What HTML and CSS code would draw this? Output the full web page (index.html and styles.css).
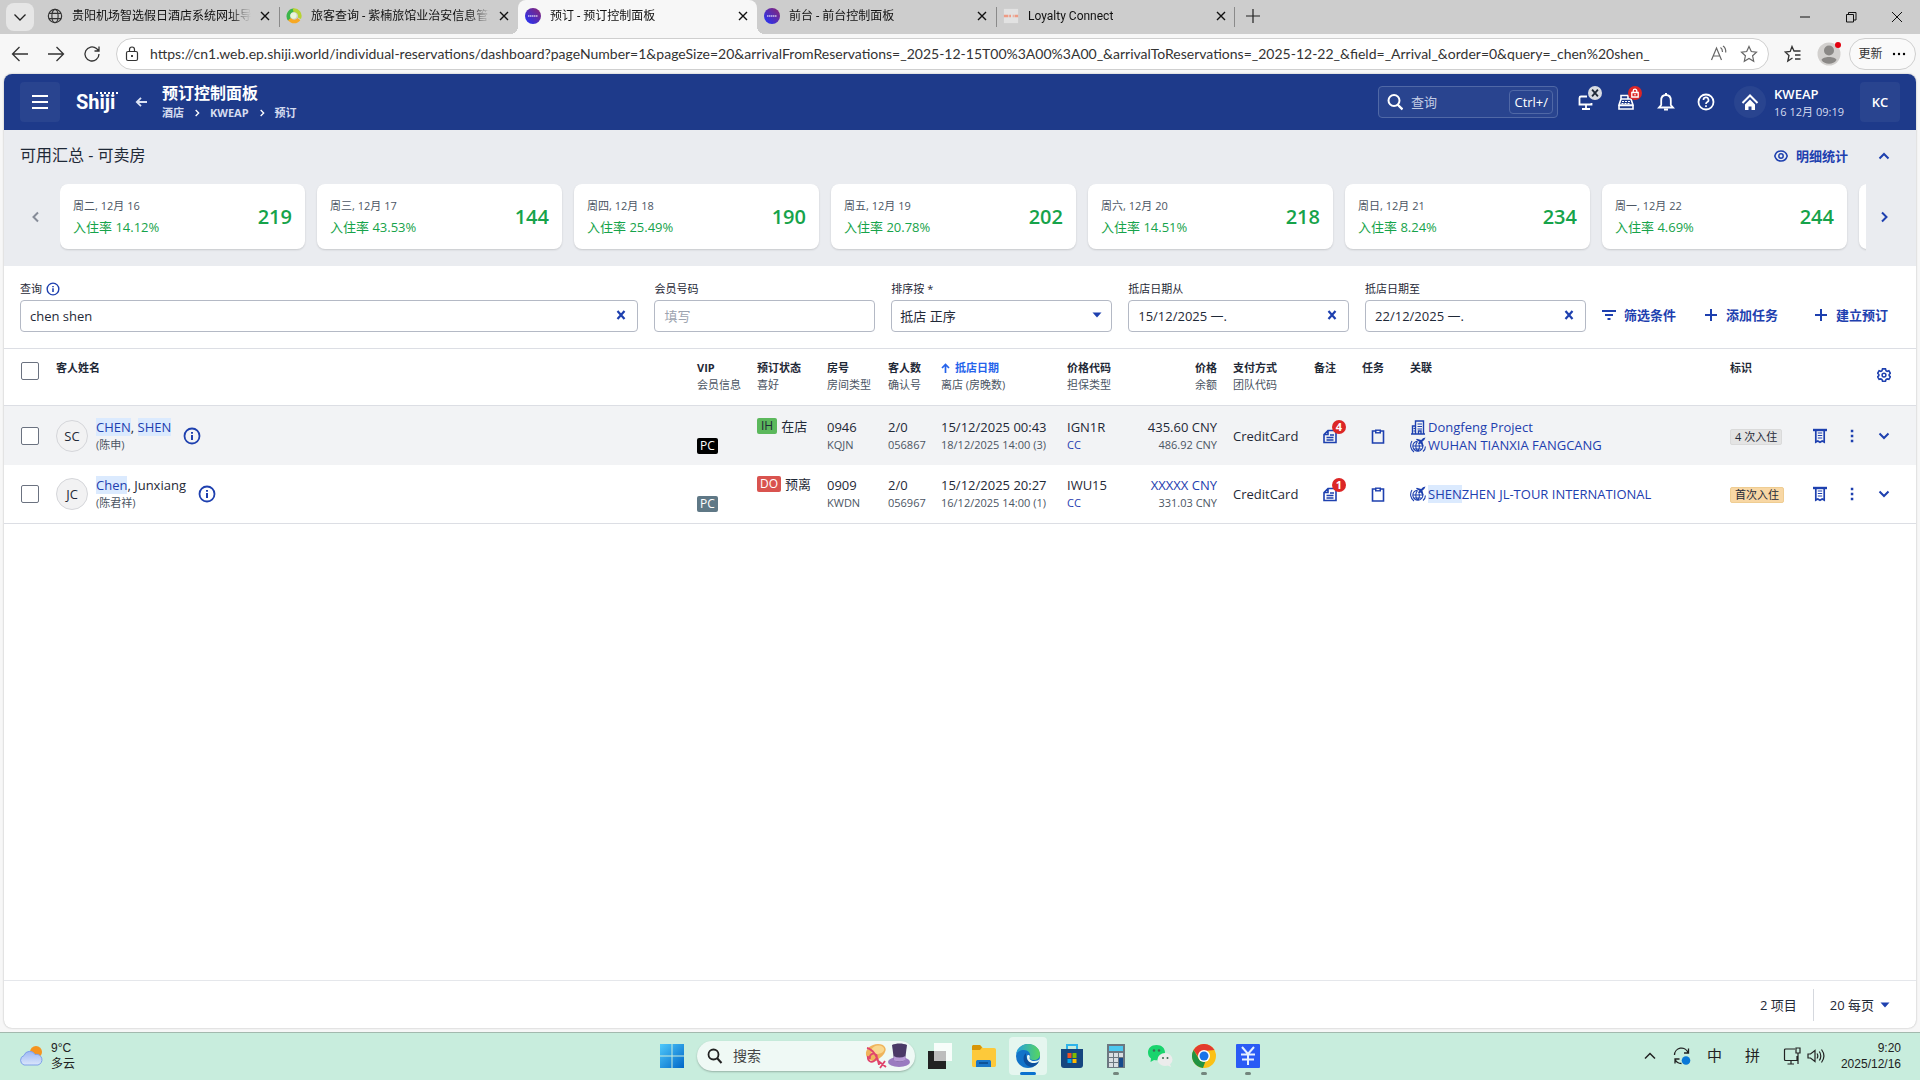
FILE: index.html
```html
<!DOCTYPE html>
<html lang="zh-CN">

<head>
    <meta charset="UTF-8">
    <meta name="viewport" content="width=device-width, initial-scale=1.0">
    <title>预订 - 预订控制面板</title>
    <link rel="stylesheet" href="styles.css">
</head>

<body>
    <!-- shared icons -->
    <svg class="sprite" aria-hidden="true">
        <symbol id="i-close" viewBox="0 0 12 12"><path d="M2 2l8 8M10 2l-8 8" fill="none" stroke="currentColor" stroke-width="1.4"/></symbol>
        <symbol id="i-clear" viewBox="0 0 12 12"><path d="M2.5 2l7 8M9.5 2l-7 8" fill="none" stroke="currentColor" stroke-width="2.2"/></symbol>
        <symbol id="i-left" viewBox="0 0 12 12"><path d="M8 1.5L3.500 6 8 10.500" fill="none" stroke="currentColor" stroke-width="2"/></symbol>
        <symbol id="i-right" viewBox="0 0 12 12"><path d="M4 1.500L8.500 6 4 10.500" fill="none" stroke="currentColor" stroke-width="2"/></symbol>
        <symbol id="i-up" viewBox="0 0 12 12"><path d="M1.500 8.500L6 4l4.500 4.500" fill="none" stroke="currentColor" stroke-width="2"/></symbol>
        <symbol id="i-down" viewBox="0 0 12 12"><path d="M1.500 3.500L6 8l4.500-4.500" fill="none" stroke="currentColor" stroke-width="2"/></symbol>
        <symbol id="i-caret" viewBox="0 0 10 6"><path d="M0.500 0.500h9L5 5.500z" fill="currentColor"/></symbol>
        <symbol id="i-plus" viewBox="0 0 14 14"><path d="M7 1v12M1 7h12" fill="none" stroke="currentColor" stroke-width="2"/></symbol>
        <symbol id="i-info" viewBox="0 0 18 18"><circle cx="9" cy="9" r="7.500" fill="none" stroke="currentColor" stroke-width="1.800"/><path d="M9 8v5M9 5v1.800" stroke="currentColor" stroke-width="2"/></symbol>
        <symbol id="i-notes" viewBox="0 0 16 16"><path d="M6 2.500H14v12H2V6.500zM6 2.500v4H2M4.500 9.500h7M4.500 12h7M8 7h4" fill="none" stroke="currentColor" stroke-width="1.600"/></symbol>
        <symbol id="i-task" viewBox="0 0 16 16"><path d="M2.500 3h11v12h-11z" fill="none" stroke="currentColor" stroke-width="1.600"/><path d="M5 1.500h6v4H5z" fill="currentColor"/><path d="M6.500 3.500h3" stroke="#fff" stroke-width="1.200"/></symbol>
        <symbol id="i-building" viewBox="0 0 16 16"><path d="M1 15h14M2.500 15V7H6M5.500 15V2h8v13M8.500 15v-3H11v3" fill="none" stroke="currentColor" stroke-width="1.400"/><path d="M7.500 5h4.500M7.500 7.500h4.500M7.500 10h4.500M3.500 9.500h1.500M3.500 12h1.500" stroke="currentColor" stroke-width="1.200"/></symbol>
        <symbol id="i-travel" viewBox="0 0 16 16"><path d="M12.800 8.500A5 5 0 1 1 7.500 4.200M3 9h9.500M3.800 12h8M7.500 4.500c-2.200 3-2.200 6.500 0 9.500M9 7.500c.8 2.300.3 4.500-1 6.500M2 4C-.3 7.500.3 12.500 4 15M13 14.500c1.500-1 2.400-3 2.400-5" fill="none" stroke="currentColor" stroke-width="1.100"/><path d="M15.500.500l-2.500.7-1.800 1.900-4.400-1.300-.8.9 3.400 2L8 6.300l.8 1.200 2-1 1.900 3.200.9-.9-1.200-4.200 1.900-1.700z" fill="currentColor"/></symbol>
        <symbol id="i-receipt" viewBox="0 0 16 16"><path d="M1 2h14" stroke="currentColor" stroke-width="2.400"/><path d="M3.800 2v12l2-1L8 14.300l2.200-1.300 2 1V2" fill="none" stroke="currentColor" stroke-width="1.700"/><path d="M5.800 5h4.400M5.800 7.500h4.400M5.800 10h4.400" stroke="currentColor" stroke-width="1.200"/></symbol>
        <symbol id="i-dots" viewBox="0 0 4 14"><path d="M.8.800h2.500v2.500H.8zM.8 5.800h2.500v2.500H.8zM.8 10.800h2.500v2.500H.8z" fill="currentColor"/></symbol>
        <symbol id="i-shiji" viewBox="0 0 16 16"><linearGradient id="gs" x1="1" y1="0" x2="0" y2="1"><stop offset="0" stop-color="#8e246e"/><stop offset="1" stop-color="#1c34ff"/></linearGradient><circle cx="8" cy="8" r="8" fill="url(#gs)"/><path d="M3 8h10" stroke="#fff" stroke-width="1.600" stroke-dasharray="1.500 .5" opacity=".7"/></symbol>
    </svg>

    <!-- browser tabs -->
    <div class="tab-bar">
        <button class="tab-list-button" aria-label="标签页列表"><svg width="14" height="14" viewBox="0 0 14 14"><path d="M1.500 4.500L7 10l5.500-5.500" fill="none" stroke="#222" stroke-width="1.300"/></svg></button>
        <div class="tab">
            <svg class="tab-icon" viewBox="0 0 18 18"><g fill="none" stroke="#333" stroke-width="1.300"><circle cx="9" cy="9" r="7.500"/><ellipse cx="9" cy="9" rx="3.500" ry="7.500"/><path d="M2.300 6h13.400M2.300 12h13.400"/></g></svg>
            <span class="tab-title">贵阳机场智选假日酒店系统网址导航</span>
            <button class="tab-close" aria-label="关闭"><svg width="12" height="12"><use href="#i-close"/></svg></button>
        </div>
        <div class="tab divided">
            <svg class="tab-icon" viewBox="0 0 18 18"><g fill="none" stroke-width="4"><path d="M4 13A6.500 6.500 0 0 1 9 2.500" stroke="#3cb54a"/><path d="M8 2.500a6.500 6.500 0 0 1 7 9" stroke="#b7d334"/><path d="M4 12.500a6.500 6.500 0 0 0 10.500 0" stroke="#f7a823"/></g><circle cx="8.500" cy="8.500" r="3.500" fill="#e9f6d8"/></svg>
            <span class="tab-title">旅客查询 - 紫楠旅馆业治安信息管理系统</span>
            <button class="tab-close" aria-label="关闭"><svg width="12" height="12"><use href="#i-close"/></svg></button>
        </div>
        <div class="tab active">
            <svg class="tab-icon"><use href="#i-shiji"/></svg>
            <span class="tab-title">预订 - 预订控制面板</span>
            <button class="tab-close" aria-label="关闭"><svg width="12" height="12"><use href="#i-close"/></svg></button>
        </div>
        <div class="tab">
            <svg class="tab-icon"><use href="#i-shiji"/></svg>
            <span class="tab-title">前台 - 前台控制面板</span>
            <button class="tab-close" aria-label="关闭"><svg width="12" height="12"><use href="#i-close"/></svg></button>
        </div>
        <div class="tab divided last">
            <svg class="tab-icon" viewBox="0 0 18 18"><rect x="1" y="1" width="16" height="16" fill="#e2e2e2"/><path d="M1 9h5M7 9h2M11 9h1M13 9h4" stroke="#ee9b84" stroke-width="3"/></svg>
            <span class="tab-title">Loyalty Connect</span>
            <button class="tab-close" aria-label="关闭"><svg width="12" height="12"><use href="#i-close"/></svg></button>
        </div>
        <button class="new-tab" aria-label="新建标签页"><svg width="16" height="16" viewBox="0 0 16 16"><path d="M8 1v14M1 8h14" stroke="#222" stroke-width="1.200"/></svg></button>
        <div class="window-buttons">
            <button aria-label="最小化"><svg width="12" height="12" viewBox="0 0 12 12"><path d="M1 6h10" stroke="#111"/></svg></button>
            <button aria-label="还原"><svg width="12" height="12" viewBox="0 0 12 12"><path d="M1.500 3.500h7v7.500h-7zM3.500 3V1.500h7.500v7.500H9" fill="none" stroke="#111"/></svg></button>
            <button aria-label="关闭窗口"><svg width="12" height="12" viewBox="0 0 12 12"><path d="M1 1l10 10M11 1L1 11" stroke="#111"/></svg></button>
        </div>
    </div>

    <!-- address bar -->
    <div class="toolbar">
        <button class="nav-button" aria-label="后退"><svg width="18" height="16" viewBox="0 0 18 16"><path d="M17 8H2M8.500 1L1.500 8l7 7" fill="none" stroke="#333" stroke-width="1.300"/></svg></button>
        <button class="nav-button" aria-label="前进"><svg width="18" height="16" viewBox="0 0 18 16"><path d="M1 8h15M9.500 1l7 7-7 7" fill="none" stroke="#333" stroke-width="1.300"/></svg></button>
        <button class="nav-button" aria-label="刷新"><svg width="18" height="18" viewBox="0 0 18 18"><path d="M16 9a7 7 0 1 1-2.500-5.400L16 6M16 1.500V6h-4.500" fill="none" stroke="#333" stroke-width="1.300"/></svg></button>
        <div class="address">
            <svg width="14" height="16" viewBox="0 0 14 16"><rect x="1.500" y="5.500" width="11" height="9" rx="1.500" fill="none" stroke="#333" stroke-width="1.200"/><path d="M4.500 5.500V3.500a2.500 2.500 0 0 1 5 0v2" fill="none" stroke="#333" stroke-width="1.200"/><circle cx="7" cy="10" r="1"/></svg>
            <input type="text" aria-label="地址" value="https://cn1.web.ep.shiji.world/individual-reservations/dashboard?pageNumber=1&amp;pageSize=20&amp;arrivalFromReservations=_2025-12-15T00%3A00%3A00_&amp;arrivalToReservations=_2025-12-22_&amp;field=_Arrival_&amp;order=0&amp;query=_chen%20shen_">
            <button aria-label="朗读"><svg width="18" height="18" viewBox="0 0 18 18"><path d="M1.500 15L6.500 3l5 12M3.200 11h6.600M10.500 2.500c1.500 1 2 2.500 2 4.500M13 1c2.500 1.700 3 4 2.700 6.500" fill="none" stroke="#666" stroke-width="1.200"/></svg></button>
            <button aria-label="收藏"><svg width="18" height="18" viewBox="0 0 18 18"><path d="M9 1.500l2.300 5 5.200.6-3.900 3.700 1.100 5.400L9 13.500l-4.700 2.700 1.100-5.400L1.500 7.100l5.200-.6z" fill="none" stroke="#666" stroke-width="1.200"/></svg></button>
        </div>
        <button class="favorites" aria-label="收藏夹"><svg width="18" height="18" viewBox="0 0 18 18"><path d="M8.500 13l-4.700 3 1.200-5.500L1.200 7l5-.6L8 1.500l2 4.500h6.500M11 10h5.500M11 14h5.500" fill="none" stroke="#333" stroke-width="1.300"/></svg></button>
        <button class="profile" aria-label="用户"><svg width="24" height="24" viewBox="0 0 24 24"><circle cx="12" cy="12" r="11.500" fill="#d2d0ce"/><circle cx="12" cy="8.500" r="5" fill="#8a8886"/><path d="M4.500 18c1-4 14-4 15 0-3 5-12 5-15 0z" fill="#8a8886"/></svg></button>
        <button class="update">更新 <svg width="16" height="4" viewBox="0 0 16 4"><circle cx="3" cy="2" r="1.200"/><circle cx="8" cy="2" r="1.200"/><circle cx="13" cy="2" r="1.200"/></svg></button>
    </div>

    <div class="app">
        <header class="app-header">
            <button class="menu-button" aria-label="菜单"><svg width="16" height="14" viewBox="0 0 16 14"><path d="M0 1h16M0 7h16M0 13h16" stroke="#fff" stroke-width="2"/></svg></button>
            <div class="logo">Shiji<svg width="26" height="4" viewBox="0 0 26 4"><path d="M1 2h24" stroke="#fff" stroke-width="2" stroke-dasharray="2 2"/></svg></div>
            <button class="back-button" aria-label="返回"><svg width="12" height="10" viewBox="0 0 12 10"><path d="M12 5H2M6 .8L1.800 5 6 9.200" fill="none" stroke="#dbe2f4" stroke-width="1.800"/></svg></button>
            <div class="heading">
                <h1>预订控制面板</h1>
                <nav class="breadcrumb">
                    <a href="#">酒店</a>
                    <svg width="8" height="8"><use href="#i-right"/></svg>
                    <a href="#">KWEAP</a>
                    <svg width="8" height="8"><use href="#i-right"/></svg>
                    <a href="#">预订</a>
                </nav>
            </div>
            <label class="global-search">
                <svg width="16" height="18" viewBox="0 0 16 18"><circle cx="7" cy="7.500" r="5.500" fill="none" stroke="#fff" stroke-width="2"/><path d="M10.500 11.500l5 5" stroke="#fff" stroke-width="2.400"/></svg>
                <input type="text" placeholder="查询" aria-label="查询">
                <kbd>Ctrl+/</kbd>
            </label>
            <div class="header-icons">
                <button aria-label="工作站">
                    <svg width="18" height="18" viewBox="0 0 18 18"><path d="M10 3.500H4A1.500 1.500 0 0 0 2.500 5v6.500h12V10M9 12v3.500M5 16h8" fill="none" stroke="#fff" stroke-width="1.800"/></svg>
                    <span class="badge gray"><svg width="10" height="10"><use href="#i-clear"/></svg></span>
                </button>
                <button aria-label="收银">
                    <svg width="18" height="18" viewBox="0 0 18 18"><path d="M4 2.500h7V6H4zM4 6h10l2 6H2zM2 12.500h14V16H2z" fill="none" stroke="#fff" stroke-width="1.600"/><path d="M5 8.500h8M4.500 10.500h9" stroke="#fff" stroke-width="1.200" stroke-dasharray="2 1"/></svg>
                    <span class="badge red"><svg width="10" height="10" viewBox="0 0 10 10"><path d="M1.800 4.500h6.400V9H1.800zM3.200 4.500V3a1.800 1.800 0 0 1 3.600 0v1.500M5 6v1.500" fill="none" stroke="#fff" stroke-width="1.300"/></svg></span>
                </button>
                <button aria-label="通知"><svg width="18" height="20" viewBox="0 0 18 20"><path d="M9 3c-3.300 0-4.800 2.500-4.800 5.500V13L2 15.500h14L13.800 13V8.500C13.800 5.500 12.300 3 9 3z" fill="none" stroke="#fff" stroke-width="1.800"/><path d="M9 1v2M7 17.500h4" stroke="#fff" stroke-width="2"/></svg></button>
                <button aria-label="帮助"><svg width="18" height="18" viewBox="0 0 18 18"><circle cx="9" cy="9" r="7.500" fill="none" stroke="#fff" stroke-width="1.800"/><path d="M6.500 7a2.500 2.500 0 1 1 3.500 2.200c-.8.400-1 .8-1 1.800M9 12.300v1.800" fill="none" stroke="#fff" stroke-width="1.700"/></svg></button>
            </div>
            <button class="home-button" aria-label="主页"><svg width="18" height="18" viewBox="0 0 18 18"><path d="M1.500 10L9 2.500l7.500 7.500" fill="none" stroke="#fff" stroke-width="2"/><path d="M4 11.500l5-5 5 5V17h-3.500v-3.500h-3V17H4z" fill="#fff"/></svg></button>
            <div class="property">
                <strong>KWEAP</strong>
                <span>16 12月 09:19</span>
            </div>
            <button class="user-button">KC</button>
        </header>

        <!-- availability -->
        <section class="availability">
            <div class="availability-top">
                <h2>可用汇总 - 可卖房</h2>
                <button class="text-button"><svg width="14" height="14" viewBox="0 0 14 14"><path d="M7 2C3.500 2 1.500 4.500.8 7 1.500 9.500 3.500 12 7 12s5.500-2.500 6.200-5C12.500 4.500 10.500 2 7 2z" fill="none" stroke="currentColor" stroke-width="1.500"/><circle cx="7" cy="7" r="2.200" fill="none" stroke="currentColor" stroke-width="1.500"/></svg>明细统计</button>
                <button class="collapse-button" aria-label="收起"><svg width="12" height="12"><use href="#i-up"/></svg></button>
            </div>
            <div class="carousel">
                <button class="prev" aria-label="上一页"><svg width="12" height="12"><use href="#i-left"/></svg></button>
                <div class="cards">
                    <div class="card"><div><p>周二, 12月 16</p><p class="rate">入住率 14.12%</p></div><strong>219</strong></div>
                    <div class="card"><div><p>周三, 12月 17</p><p class="rate">入住率 43.53%</p></div><strong>144</strong></div>
                    <div class="card"><div><p>周四, 12月 18</p><p class="rate">入住率 25.49%</p></div><strong>190</strong></div>
                    <div class="card"><div><p>周五, 12月 19</p><p class="rate">入住率 20.78%</p></div><strong>202</strong></div>
                    <div class="card"><div><p>周六, 12月 20</p><p class="rate">入住率 14.51%</p></div><strong>218</strong></div>
                    <div class="card"><div><p>周日, 12月 21</p><p class="rate">入住率 8.24%</p></div><strong>234</strong></div>
                    <div class="card"><div><p>周一, 12月 22</p><p class="rate">入住率 4.69%</p></div><strong>244</strong></div>
                    <div class="card"></div>
                </div>
                <button class="next" aria-label="下一页"><svg width="12" height="12"><use href="#i-right"/></svg></button>
            </div>
        </section>

        <!-- filters -->
        <form class="filters">
            <div class="field wide">
                <label for="query">查询 <svg width="14" height="14"><use href="#i-info"/></svg></label>
                <div class="control"><input id="query" type="text" value="chen shen"><button type="button" aria-label="清除"><svg width="12" height="12"><use href="#i-clear"/></svg></button></div>
            </div>
            <div class="field">
                <label for="member">会员号码</label>
                <div class="control"><input id="member" type="text" placeholder="填写"></div>
            </div>
            <div class="field">
                <label for="sort">排序按 *</label>
                <div class="control">
                    <select id="sort"><option>抵店 正序</option></select>
                    <svg class="caret" width="10" height="6"><use href="#i-caret"/></svg>
                </div>
            </div>
            <div class="field">
                <label for="from">抵店日期从</label>
                <div class="control"><input id="from" type="text" value="15/12/2025 一."><button type="button" aria-label="清除"><svg width="12" height="12"><use href="#i-clear"/></svg></button></div>
            </div>
            <div class="field">
                <label for="to">抵店日期至</label>
                <div class="control"><input id="to" type="text" value="22/12/2025 一."><button type="button" aria-label="清除"><svg width="12" height="12"><use href="#i-clear"/></svg></button></div>
            </div>
            <div class="filter-actions">
                <button type="button" class="text-button"><svg width="14" height="14" viewBox="0 0 14 14"><path d="M0 3h14M3 7h8M5.500 11h3" stroke="currentColor" stroke-width="1.800"/></svg>筛选条件</button>
                <button type="button" class="text-button"><svg width="14" height="14"><use href="#i-plus"/></svg>添加任务</button>
                <button type="button" class="text-button create"><svg width="14" height="14"><use href="#i-plus"/></svg>建立预订</button>
            </div>
        </form>

        <!-- reservations -->
        <main class="results">
            <table>
                <thead>
                    <tr>
                        <th class="col-select"><input type="checkbox" aria-label="全选"></th>
                        <th>客人姓名</th>
                        <th class="col-vip">VIP<small>会员信息</small></th>
                        <th class="col-status">预订状态<small>喜好</small></th>
                        <th class="col-room">房号<small>房间类型</small></th>
                        <th class="col-guests">客人数<small>确认号</small></th>
                        <th class="col-date"><span class="sorted"><svg width="9" height="10" viewBox="0 0 9 10"><path d="M4.500 10V2M1 5l3.500-3.500L8 5" fill="none" stroke="currentColor" stroke-width="1.700"/></svg>抵店日期</span><small>离店 (房晚数)</small></th>
                        <th class="col-code">价格代码<small>担保类型</small></th>
                        <th class="col-price">价格<small>余额</small></th>
                        <th class="col-pay">支付方式<small>团队代码</small></th>
                        <th class="col-icon">备注</th>
                        <th class="col-icon">任务</th>
                        <th class="col-link">关联</th>
                        <th class="col-flag">标识</th>
                        <th class="col-actions"><button aria-label="设置"><svg width="14" height="14" viewBox="0 0 16 16"><path d="M6.300 1h3.400l.6 2 1.300.8 2-.6 1.700 2.900L13.900 7.500v1.300l1.400 1.300-1.700 2.900-2-.5-1.300.7-.6 1.900H6.300l-.6-1.900-1.300-.7-2 .5-1.700-2.900L2.100 8.800V7.500L.7 6.100l1.700-2.900 2 .6L5.700 3z" fill="none" stroke="currentColor" stroke-width="1.800"/><circle cx="8" cy="8.100" r="2.200" fill="none" stroke="currentColor" stroke-width="1.700"/></svg></button></th>
                    </tr>
                </thead>
                <tbody>
                    <tr>
                        <td class="col-select"><input type="checkbox" aria-label="选择 CHEN, SHEN"></td>
                        <td>
                            <div class="guest">
                                <span class="avatar">SC</span>
                                <div><mark>CHEN</mark>, <mark>SHEN</mark><small>(陈申)</small></div>
                                <svg width="18" height="18"><use href="#i-info"/></svg>
                            </div>
                        </td>
                        <td><div class="low"><span class="tag black">PC</span></div></td>
                        <td><div class="high"><span class="tag green">IH</span>在店</div></td>
                        <td>0946<small>KQJN</small></td>
                        <td>2/0<small>056867</small></td>
                        <td>15/12/2025 00:43<small>18/12/2025 14:00 (3)</small></td>
                        <td>IGN1R<small><a href="#">CC</a></small></td>
                        <td class="col-price">435.60 CNY<small>486.92 CNY</small></td>
                        <td>CreditCard</td>
                        <td><button class="notes" aria-label="备注"><svg width="16" height="16"><use href="#i-notes"/></svg><span class="badge red">4</span></button></td>
                        <td><button class="task" aria-label="任务"><svg width="16" height="16"><use href="#i-task"/></svg></button></td>
                        <td>
                            <a class="link" href="#"><svg width="16" height="16"><use href="#i-building"/></svg>Dongfeng Project</a>
                            <a class="link" href="#"><svg width="16" height="16"><use href="#i-travel"/></svg>WUHAN TIANXIA FANGCANG</a>
                        </td>
                        <td><span class="stay">4 次入住</span></td>
                        <td class="col-actions">
                            <div class="actions">
                                <button aria-label="账单"><svg width="16" height="16"><use href="#i-receipt"/></svg></button>
                                <button aria-label="更多"><svg width="4" height="14"><use href="#i-dots"/></svg></button>
                                <button aria-label="展开"><svg width="12" height="12"><use href="#i-down"/></svg></button>
                            </div>
                        </td>
                    </tr>
                    <tr>
                        <td class="col-select"><input type="checkbox" aria-label="选择 Chen, Junxiang"></td>
                        <td>
                            <div class="guest">
                                <span class="avatar">JC</span>
                                <div><mark>Chen</mark>, Junxiang<small>(陈君祥)</small></div>
                                <svg width="18" height="18"><use href="#i-info"/></svg>
                            </div>
                        </td>
                        <td><div class="low"><span class="tag slate">PC</span></div></td>
                        <td><div class="high"><span class="tag crimson">DO</span>预离</div></td>
                        <td>0909<small>KWDN</small></td>
                        <td>2/0<small>056967</small></td>
                        <td>15/12/2025 20:27<small>16/12/2025 14:00 (1)</small></td>
                        <td>IWU15<small><a href="#">CC</a></small></td>
                        <td class="col-price"><a href="#">XXXXX CNY</a><small>331.03 CNY</small></td>
                        <td>CreditCard</td>
                        <td><button class="notes" aria-label="备注"><svg width="16" height="16"><use href="#i-notes"/></svg><span class="badge red">1</span></button></td>
                        <td><button class="task" aria-label="任务"><svg width="16" height="16"><use href="#i-task"/></svg></button></td>
                        <td>
                            <a class="link" href="#"><svg width="16" height="16"><use href="#i-travel"/></svg><span><mark>SHEN</mark>ZHEN JL-TOUR INTERNATIONAL</span></a>
                        </td>
                        <td><span class="stay first">首次入住</span></td>
                        <td class="col-actions">
                            <div class="actions">
                                <button aria-label="账单"><svg width="16" height="16"><use href="#i-receipt"/></svg></button>
                                <button aria-label="更多"><svg width="4" height="14"><use href="#i-dots"/></svg></button>
                                <button aria-label="展开"><svg width="12" height="12"><use href="#i-down"/></svg></button>
                            </div>
                        </td>
                    </tr>
                </tbody>
            </table>
        </main>

        <footer class="pager">
            <span>2 项目</span>
            <button class="page-size">20 每页<svg width="10" height="6"><use href="#i-caret"/></svg></button>
        </footer>
    </div>

    <!-- taskbar -->
    <div class="taskbar">
        <div class="weather">
            <svg width="24" height="22" viewBox="0 0 24 22"><linearGradient id="gw" x1="0" y1="0" x2="0" y2="1"><stop offset="0" stop-color="#9db8f3"/><stop offset="1" stop-color="#dbe6fb"/></linearGradient><circle cx="17" cy="7" r="6" fill="#f5941f"/><path d="M5 20a5 5 0 0 1 0-9.500A6 6 0 0 1 16 9.500a5.300 5.300 0 0 1 3 10.500z" fill="url(#gw)" stroke="#7ea0ea"/></svg>
            <div>9°C<br>多云</div>
        </div>
        <div class="task-icons">
            <button aria-label="开始"><svg width="24" height="24" viewBox="0 0 24 24"><linearGradient id="gb" x1="0" y1="0" x2="1" y2="1"><stop offset="0" stop-color="#4fc9fb"/><stop offset="1" stop-color="#0067c8"/></linearGradient><path d="M0 0h11.500v11.500H0zM12.500 0H24v11.500H12.500zM0 12.500h11.500V24H0zM12.500 12.500H24V24H12.500z" fill="url(#gb)"/></svg></button>
            <label class="task-search">
                <svg width="16" height="16" viewBox="0 0 16 16"><circle cx="6.500" cy="6.500" r="5" fill="none" stroke="#222" stroke-width="1.800"/><path d="M10 10l4.500 5" stroke="#222" stroke-width="2"/></svg>
                <input type="text" placeholder="搜索" aria-label="搜索">
                <svg width="46" height="26" viewBox="0 0 46 26">
                    <path d="M1 12C0 6 6 1 13 1c7 0 9 5 7 8-2 5-6 6-9 9-4 1-9-2-10-6z" fill="#efb45c"/><path d="M6 8c1-5 8-7 12-4 3 3 0 6-5 7-4 1-7 0-7-3z" fill="#f9d78e"/><path d="M2 5c5 1 11 8 12 17M3 13c-1 5 3 7 6 5s4-6 1-7-6 1-5 5M12 17l9 7M20 18l-5 7" fill="none" stroke="#e0446c" stroke-width="1.800"/>
                    <ellipse cx="34" cy="19" rx="11" ry="5" fill="#9a7bc0"/><path d="M27 2c4-2 11-2 15 0l-2 15c-3 2-8 2-11 0z" fill="#4a3a66"/><path d="M28.500 13c4 2 8 2 12 0v4c-4 2-8 2-11.500.500z" fill="#b79bd6"/>
                </svg>
            </label>
            <button aria-label="任务视图"><svg width="24" height="26" viewBox="0 0 24 26"><path d="M0 8h18v18H0z" fill="#222"/><path d="M6 0h18v18H6z" fill="#fff" opacity=".85"/><path d="M6 8h12v10H6z" fill="#bdbdbd"/></svg></button>
            <button aria-label="文件资源管理器"><svg width="24" height="24" viewBox="0 0 24 24"><path d="M0 3c0-1.500.8-2 2-2h6l3 3h11c1.500 0 2 .8 2 2v15c0 1.500-.5 2-2 2H2c-1.500 0-2-.5-2-2z" fill="#fdc93a"/><path d="M0 6V3c0-1.500.8-2 2-2h6l2 2.500L8 6z" fill="#d79507"/><path d="M4 23v-5c0-1.500.8-2 2-2h11c1.200 0 2 .5 2 2v5z" fill="#1a76c8"/><path d="M7 19h9" stroke="#0d5297" stroke-width="2"/></svg></button>
            <button class="current" aria-label="Edge"><svg width="24" height="24" viewBox="0 0 24 24"><linearGradient id="ge" x1="0" y1="0" x2="1" y2="0"><stop offset="0" stop-color="#229fe0"/><stop offset="1" stop-color="#58d65e"/></linearGradient><circle cx="12" cy="12" r="12" fill="#1173c9"/><path d="M0 11C1 4 6 0 12 0c7 0 12 5 12 10 0 4-3 6-6 6-3.500 0-5-1.500-4-3C15 9 12 6 8 6c-4 0-7 2-8 5z" fill="url(#ge)"/><path d="M10 9c-5 4-2 13 5 14 4-.5 7-3 8-6-7 4-14 0-13-8z" fill="#0c4f9c"/><path d="M13.800 13c-1 2 1 4 4.500 4 2.500 0 4.500-1 5.200-2l-.8 2.500c-6 3.500-12.200.500-11.700-5 .3-2 3-2 2.800.5z" fill="#e7f6f2"/></svg></button>
            <button aria-label="商店"><svg width="24" height="26" viewBox="0 0 24 26"><path d="M7 7V2h10v5" fill="none" stroke="#2fb4ea" stroke-width="2"/><path d="M1 6h22v16c0 2-1 3-3 3H4c-2 0-3-1-3-3z" fill="#15467f"/><path d="M7.500 10h4v5h-4z" fill="#f25022"/><path d="M12.500 10h4v5h-4z" fill="#7fba00"/><path d="M7.500 16h4v4h-4z" fill="#00a4ef"/><path d="M12.500 16h4v4h-4z" fill="#ffb900"/></svg></button>
            <button class="running" aria-label="计算器"><svg width="20" height="26" viewBox="0 0 20 26"><path d="M1 1h18v24H1z" fill="#6b7780"/><path d="M3 3h14v5H3z" fill="#4cc8ef"/><path d="M3 10h4v4H3zM8 10h4v4H8zM13 10h4v4h-4zM3 15h4v4H3zM8 15h4v4H8zM3 20h4v4H3zM8 20h4v4H8z" fill="#d9dee2"/><path d="M13 15h4v9h-4z" fill="#164a8c"/></svg></button>
            <button aria-label="微信"><svg width="26" height="24" viewBox="0 0 26 24"><path d="M9.500 1C4 1 1 4.500 1 8.500c0 2.500 1 4.500 3 6L3.500 18l3.500-2c6 1.500 11-2 11-7.500C18 4.500 15 1 9.500 1z" fill="#19d46d"/><ellipse cx="18" cy="15.500" rx="7.500" ry="6.500" fill="#ececec"/><path d="M20 21l4 2-1-3z" fill="#ececec"/><g fill="#3b6b51"><circle cx="7" cy="6.500" r="1.200"/><circle cx="12" cy="6.500" r="1.200"/><circle cx="16" cy="14" r="1"/><circle cx="20.500" cy="14" r="1"/></g></svg></button>
            <button class="running" aria-label="Chrome"><svg width="24" height="24" viewBox="0 0 24 24"><circle cx="12" cy="12" r="12" fill="#fbc116"/><path d="M1.600 6A12 12 0 0 1 22.400 6L12 7a5 5 0 0 0-4.500 7.500z" fill="#e33b2e"/><path d="M1.600 6l5.700 9.500c1.500 2 4 2.500 6.200 1.500L11 24A12 12 0 0 1 1.600 6z" fill="#229342"/><circle cx="12" cy="12" r="6" fill="#fff"/><circle cx="12" cy="12" r="4.500" fill="#1a73e8"/></svg></button>
            <button class="running" aria-label="收银系统"><svg width="24" height="24" viewBox="0 0 24 24"><rect width="24" height="24" rx="1" fill="#2a5bf5"/><path d="M6 3l6 7 6-7M12 10v11M5 10.500h14M6 15.500h12" fill="none" stroke="#e6f0ff" stroke-width="2"/></svg></button>
        </div>
        <div class="tray">
            <svg width="14" height="14" viewBox="0 0 14 14"><path d="M2 9.500L7 4.500l5 5" fill="none" stroke="#222" stroke-width="1.500"/></svg>
            <svg width="18" height="18" viewBox="0 0 18 18"><path d="M1.500 8a7 7 0 0 1 13.500-2.500M15.500 1.500v4.500H11M2 16.500V12h4.500M2 12.500c1.500 3 3.500 4 6.500 4" fill="none" stroke="#222" stroke-width="1.300"/><circle cx="13" cy="13.500" r="4.300" fill="#0a78d7"/></svg>
            <span>中</span>
            <span>拼</span>
            <svg width="18" height="18" viewBox="0 0 18 18"><path d="M12 2H2.500a1 1 0 0 0-1 1v9.500a1 1 0 0 0 1 1H14V9M8 13.500V17M4.500 17H11M13 1h4v5h-4zM15 6v11" fill="none" stroke="#222" stroke-width="1.200"/></svg>
            <svg class="speaker" width="18" height="16" viewBox="0 0 18 16"><path d="M1 6v4h2.500L8 13.500v-11L3.500 6zM10 5.500c1 1.500 1 3.500 0 5M12.300 3.500c2 2.500 2 6.500 0 9M14.500 1.500c3 4 3 9 0 13" fill="none" stroke="#222" stroke-width="1.200"/></svg>
            <div class="clock">9:20<br>2025/12/16</div>
        </div>
    </div>
</body>

</html>
```
FILE: styles.css
```css
* {
    box-sizing: border-box;
}

body {
    margin: 0;
    height: 100vh;
    display: flex;
    flex-direction: column;
    background-color: #f7f7f7;
    color: #1f2937;
    font-family: "Open Sans", "Noto Sans CJK SC", sans-serif;
    font-size: 13px;
    line-height: 18px;
}

button,
input,
select {
    margin: 0;
    padding: 0;
    border: 0;
    background: none;
    color: inherit;
    font: inherit;
    outline: none;
}

button {
    display: flex;
    align-items: center;
    justify-content: center;
    cursor: pointer;
}

svg {
    flex: none;
    display: block;
}

p,
h1,
h2 {
    margin: 0;
}

a {
    color: #1e40af;
    text-decoration: none;
}

.sprite {
    position: absolute;
    width: 0;
    height: 0;
}

/* browser tabs */
.tab-bar {
    display: flex;
    flex: none;
    height: 34px;
    background-color: #cdcdcd;
    color: #111;
    font-family: Roboto, "Noto Sans CJK SC", sans-serif;
    font-size: 12px;
}

.tab-list-button {
    width: 28px;
    height: 28px;
    margin: 3px 6px;
    border-radius: 8px;
    background-color: #e6e6e6;
}

.tab {
    position: relative;
    display: flex;
    align-items: center;
    flex: 0 1 239px;
    min-width: 0;
    height: 34px;
    padding: 0 6px 2px 7px;
}

.tab-icon {
    width: 16px;
    height: 16px;
    margin: 0 9px 0 0;
}

.tab-title {
    flex: 1;
    min-width: 0;
    overflow: hidden;
    white-space: nowrap;
    mask-image: linear-gradient(to right, #000 88%, transparent);
}

.tab-close {
    width: 16px;
    height: 16px;
    margin-left: 6px;
}

.divided::before,
.last::after {
    content: "";
    position: absolute;
    left: 0;
    top: 7px;
    width: 1px;
    height: 20px;
    background-color: #8a8a8a;
}

.last::after {
    left: auto;
    right: 0;
}

.active {
    background-color: #f7f7f7;
    border-radius: 8px 8px 0 0;
}

.active::before,
.active::after {
    content: "";
    position: absolute;
    bottom: 0;
    left: -8px;
    width: 8px;
    height: 8px;
    background: radial-gradient(circle at 0 0, transparent 8px, #f7f7f7 8px);
}

.active::after {
    left: auto;
    right: -8px;
    background: radial-gradient(circle at 100% 0, transparent 8px, #f7f7f7 8px);
}

.new-tab {
    width: 36px;
    height: 32px;
}

.window-buttons {
    display: flex;
    margin-left: auto;
}

.window-buttons button {
    width: 46px;
    height: 34px;
}

/* address bar */
.toolbar {
    display: flex;
    align-items: center;
    flex: none;
    height: 40px;
    padding: 0 4px 0 2px;
    color: #333;
    font-family: Lato, "Noto Sans CJK SC", sans-serif;
    font-size: 14px;
}

.nav-button {
    width: 36px;
    height: 32px;
}

.address {
    display: flex;
    align-items: center;
    flex: 1;
    height: 32px;
    margin: 0 8px 0 6px;
    padding: 0 4px 0 8px;
    border: 1px solid #cfcfcf;
    border-radius: 16px;
    background-color: #fff;
}

.address input {
    flex: 1;
    min-width: 0;
    margin-left: 11px;
}

.address button {
    width: 30px;
    height: 30px;
}

.favorites {
    width: 32px;
    height: 32px;
}

.profile {
    position: relative;
    width: 24px;
    height: 24px;
    margin: 0 8px;
}

.profile::after {
    content: "";
    position: absolute;
    top: 0;
    right: 0;
    width: 6px;
    height: 6px;
    border-radius: 50%;
    background-color: #e3000f;
}

.update {
    gap: 8px;
    width: 67px;
    height: 32px;
    border: 1px solid #cfcfcf;
    border-radius: 16px;
    background-color: #fafafa;
    font-size: 12px;
}

/* app */
.app {
    display: flex;
    flex-direction: column;
    flex: 1;
    min-height: 0;
    margin: 0 4px 4px;
    border-radius: 8px;
    overflow: hidden;
    background-color: #fff;
    box-shadow: 0 0 2px rgba(0, 0, 0, 0.3);
}

.app-header {
    display: flex;
    align-items: center;
    flex: none;
    height: 56px;
    padding: 0 16px;
    background-color: #1e3a8a;
    color: #fff;
}

.menu-button,
.user-button {
    width: 40px;
    height: 40px;
    border-radius: 4px;
    background-color: #29448f;
    font-weight: 600;
}

.logo {
    position: relative;
    width: 43px;
    margin: 0 16px;
    font-family: Roboto, sans-serif;
    font-size: 20px;
    font-weight: 700;
    line-height: 24px;
}

.logo svg {
    position: absolute;
    top: 1px;
    left: 19px;
}

.heading {
    margin-left: 15px;
}

.heading h1 {
    font-size: 16px;
    font-weight: 700;
    line-height: 20px;
}

.breadcrumb {
    display: flex;
    align-items: center;
    gap: 9px;
    padding-top: 1px;
    font-size: 11px;
    font-weight: 700;
}

.breadcrumb a {
    color: #d5dcf0;
}

.global-search {
    display: flex;
    align-items: center;
    width: 180px;
    height: 32px;
    margin-left: auto;
    padding: 0 4px 0 8px;
    border: 1px solid #5068a6;
    border-radius: 4px;
    background-color: #29448f;
}

.global-search input {
    flex: 1;
    min-width: 0;
    margin-left: 8px;
}

.global-search input::placeholder {
    color: #c3cce4;
}

.global-search kbd {
    height: 24px;
    padding: 0 4px;
    border: 1px solid #5068a6;
    border-radius: 4px;
    font: inherit;
    line-height: 22px;
}

.header-icons {
    display: flex;
    margin: 0 8px;
}

.header-icons button {
    position: relative;
    width: 40px;
    height: 40px;
}

.badge {
    position: absolute;
    top: 4px;
    left: 22px;
    display: flex;
    align-items: center;
    justify-content: center;
    width: 14px;
    height: 14px;
    border-radius: 50%;
    color: #fff;
    font-size: 11px;
    font-weight: 700;
    line-height: 14px;
}

.badge.red {
    background-color: #dc2626;
}

.badge.gray {
    background-color: #d9dce3;
    color: #1f2937;
}

.home-button {
    width: 32px;
    height: 32px;
    border-radius: 50%;
    background-color: #29448f;
}

.property {
    display: flex;
    flex-direction: column;
    margin: 0 16px 0 8px;
    padding-top: 1px;
}

.property strong {
    font-weight: 600;
}

.property span {
    color: #d5dcf0;
    font-size: 11px;
}

/* availability */
.availability {
    flex: none;
    padding-top: 12px;
    background-color: #eaecf0;
    color: #1e40af;
}

.availability-top {
    display: flex;
    align-items: center;
    height: 28px;
    padding: 0 16px;
}

.availability h2 {
    margin-right: auto;
    padding-bottom: 2px;
    color: #1f2937;
    font-size: 16px;
    font-weight: 400;
}

.text-button {
    gap: 8px;
    color: #1e40af;
    font-weight: 700;
    white-space: nowrap;
}

.collapse-button {
    width: 32px;
    height: 28px;
    margin-left: 20px;
}

.carousel {
    display: flex;
    padding: 14px 14px 13px 8px;
}

.prev {
    width: 48px;
    padding-bottom: 4px;
    color: #868c98;
}

.next {
    width: 36px;
    padding-bottom: 4px;
}

.cards {
    display: flex;
    flex: 1;
    gap: 12px;
    min-width: 0;
    padding-bottom: 4px;
    overflow: hidden;
}

.card {
    display: flex;
    align-items: center;
    justify-content: space-between;
    flex: 0 0 245px;
    height: 65px;
    padding: 0 13px;
    border-radius: 8px;
    background-color: #fff;
    color: #4b5563;
    box-shadow: 0 1px 2px rgba(0, 0, 0, 0.15);
    font-size: 11px;
}

.card .rate {
    margin-top: 3px;
    font-size: 13px;
}

.card .rate,
.card strong {
    color: #16a34a;
}

.card strong {
    font-size: 20px;
    font-weight: 600;
}

/* filters */
.filters {
    display: flex;
    align-items: flex-end;
    flex: none;
    gap: 16px;
    padding: 15px 16px 16px;
    border-bottom: 1px solid #dcdee4;
}

.field {
    flex: 5 1 0;
    min-width: 0;
}

.field.wide {
    flex-grow: 14;
}

.field label {
    display: flex;
    align-items: center;
    gap: 4px;
    margin-bottom: 3px;
    font-size: 11px;
    line-height: 16px;
}

.field label svg {
    color: #1e40af;
}

.control {
    position: relative;
    display: flex;
    height: 32px;
    border: 1px solid #b4b9c5;
    border-radius: 4px;
}

.control input,
.control select {
    flex: 1;
    min-width: 0;
    padding-left: 9px;
    appearance: none;
}

.control select {
    padding-left: 8px;
}

.control input::placeholder {
    color: #9ca3af;
}

.control button {
    width: 32px;
    padding-bottom: 2px;
    color: #1e40af;
}

.caret {
    position: absolute;
    top: 11px;
    right: 9px;
    color: #1e40af;
    pointer-events: none;
}

.filter-actions {
    display: flex;
    gap: 28px;
    height: 32px;
    padding: 0 12px 2px 0;
}

.create {
    margin-left: 8px;
}

/* reservations */
.results {
    flex: 1;
    min-height: 0;
    overflow: auto;
}

table {
    width: 100%;
    border-collapse: separate;
    border-spacing: 0;
    table-layout: fixed;
}

th,
td {
    padding: 0 16px 0 0;
    text-align: left;
    white-space: nowrap;
}

th {
    height: 57px;
    padding-top: 10px;
    border-bottom: 1px solid #dcdee4;
    font-size: 11px;
    font-weight: 700;
    line-height: 17px;
    vertical-align: top;
}

td {
    height: 59px;
    vertical-align: middle;
}

tbody tr:nth-child(odd) {
    background-color: #f2f3f5;
}

tbody tr:last-child td {
    border-bottom: 1px solid #dcdee4;
}

small {
    display: block;
    color: #4b5563;
    font-size: 11px;
    font-weight: 400;
}

mark {
    display: inline-block;
    background-color: #dbeafe;
    color: #1e40af;
}

.col-select {
    width: 52px;
    padding-left: 17px;
}

th.col-select {
    padding-top: 13px;
}

.col-select input {
    display: block;
    width: 18px;
    height: 18px;
    border: 1px solid #6b7280;
    border-radius: 2px;
    background-color: #fff;
    appearance: none;
}

.col-vip {
    width: 60px;
}

.col-status {
    width: 70px;
}

.col-room {
    width: 61px;
}

.col-guests {
    width: 53px;
}

.col-date {
    width: 126px;
}

.col-code {
    width: 70px;
}

.col-price {
    width: 96px;
    text-align: right;
}

.col-pay {
    width: 81px;
}

.col-icon {
    width: 48px;
}

.col-link {
    width: 320px;
}

.col-flag {
    width: 74px;
}

.col-actions {
    width: 112px;
    padding-right: 16px;
}

.col-actions button {
    width: 32px;
    height: 32px;
    margin-left: auto;
    color: #1e40af;
}

.sorted {
    display: flex;
    align-items: center;
    gap: 5px;
    color: #2563eb;
}

.guest {
    display: flex;
    align-items: center;
}

.guest > svg {
    margin-left: 12px;
    color: #1e40af;
}

.avatar {
    width: 32px;
    height: 32px;
    margin-right: 8px;
    border: 1px solid #d5d6da;
    border-radius: 50%;
    background-color: #f2f2f3;
    line-height: 30px;
    text-align: center;
}

.low,
.high {
    display: flex;
    gap: 4px;
    height: 36px;
}

.low {
    align-items: flex-end;
}

.high {
    align-items: flex-start;
    line-height: 16px;
}

.tag {
    padding: 0 3px;
    border-radius: 2px;
    color: #fff;
    font-size: 12px;
    line-height: 16px;
}

.black {
    background-color: #000;
}

.slate {
    background-color: #5f7886;
}

.green {
    padding: 0 4px;
    background-color: #5cb85c;
    color: #1f2937;
}

.crimson {
    background-color: #d9534f;
}

.notes,
.task {
    position: relative;
    height: 32px;
    margin-left: 8px;
    color: #1e40af;
}

.notes .badge {
    top: 0;
    left: 10px;
}

.link {
    display: flex;
    align-items: center;
    gap: 2px;
}

.stay {
    display: inline-block;
    padding: 0 4px;
    border: 1px solid #dadada;
    border-radius: 2px;
    background-color: #e4e4e4;
    font-size: 11px;
    line-height: 14px;
    vertical-align: middle;
}

.stay.first {
    border-color: #efcd92;
    background-color: #f8d7a4;
}

.actions {
    display: flex;
}

/* footer */
.pager {
    display: flex;
    align-items: center;
    flex: none;
    height: 48px;
    padding-right: 26px;
    border-top: 1px solid #e5e7eb;
}

.pager span {
    margin-left: auto;
    padding-right: 16px;
}

.page-size {
    gap: 6px;
    height: 32px;
    padding-left: 16px;
    border-left: 1px solid #d5d8de;
}

.page-size svg {
    color: #1e40af;
}

/* taskbar */
.taskbar {
    display: grid;
    grid-template-columns: 1fr auto 1fr;
    flex: none;
    height: 48px;
    padding-bottom: 2px;
    border-top: 1px solid #a3b9ae;
    background-color: #c8eddd;
    color: #222;
    font-family: "Liberation Sans", "Noto Sans CJK SC", sans-serif;
    font-size: 12px;
    line-height: 16px;
}

.weather {
    display: flex;
    align-items: center;
    gap: 8px;
    padding-left: 19px;
}

.task-icons {
    display: flex;
    align-items: center;
    gap: 6px;
}

.task-icons button {
    position: relative;
    width: 38px;
    height: 38px;
    border-radius: 4px;
}

.task-search {
    display: flex;
    align-items: center;
    width: 218px;
    height: 30px;
    padding: 0 4px 0 10px;
    border-radius: 15px;
    background-color: #eff9f5;
    box-shadow: 0 1px 2px rgba(0, 0, 0, 0.25);
}

.task-search input {
    flex: 1;
    min-width: 0;
    margin-left: 10px;
    font-size: 14px;
}

.task-search input::placeholder {
    color: #444;
}

.current {
    background-color: #e5f6ef;
}

.current::after,
.running::after {
    content: "";
    position: absolute;
    bottom: 0;
    left: 16px;
    width: 6px;
    height: 3px;
    border-radius: 2px;
    background-color: #73867d;
}

.current::after {
    left: 11px;
    width: 16px;
    background-color: #0a72cf;
}

.tray {
    display: flex;
    align-items: center;
    justify-content: flex-end;
    gap: 16px;
    padding-right: 19px;
}

.tray span {
    margin-right: 7px;
    font-size: 15px;
}

.speaker {
    margin-left: -10px;
}

.clock {
    text-align: right;
}
```
